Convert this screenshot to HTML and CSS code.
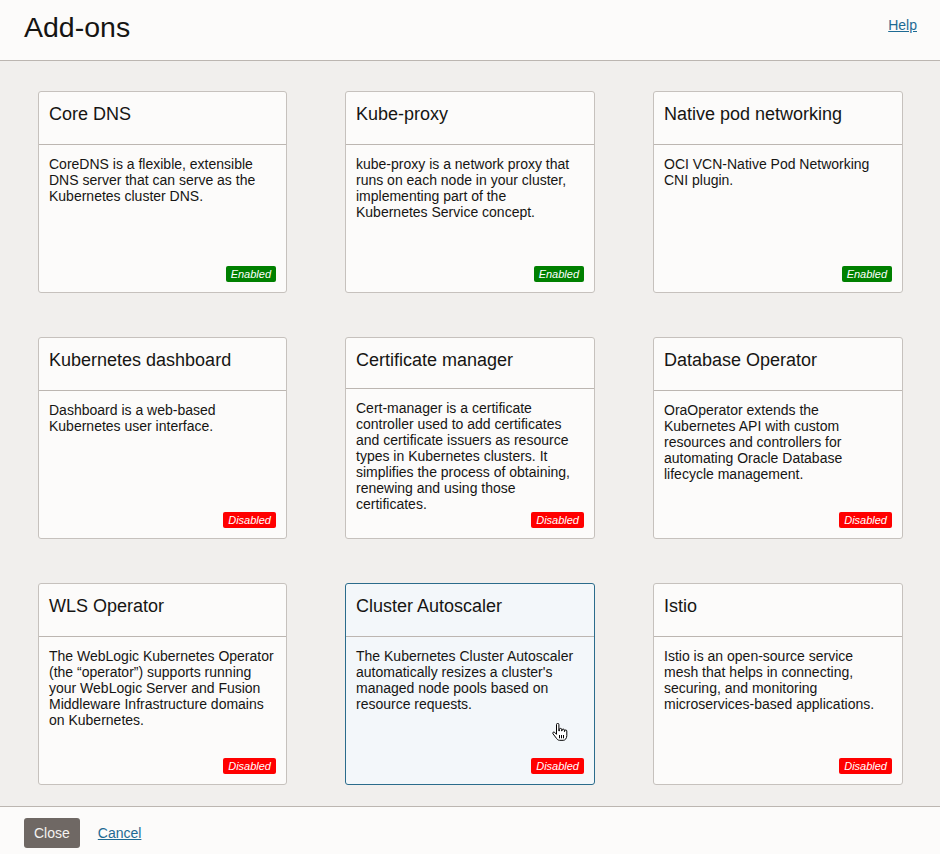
FILE: index.html
```html
<!DOCTYPE html>
<html lang="en">
<head>
<meta charset="utf-8">
<title>Add-ons</title>
<link rel="stylesheet" href="styles.css">
</head>
<body>
<div class="dialog">
  <header class="dlg-header">
    <h1 class="dlg-title">Add-ons</h1>
    <a class="link help" href="#">Help</a>
  </header>
  <main class="dlg-body">
    <div class="grid">
      <div class="card">
        <div class="card-head">Core DNS</div>
        <div class="card-body">
          <p class="desc">CoreDNS is a flexible, extensible DNS server that can serve as the Kubernetes cluster DNS.</p>
          <span class="badge on">Enabled</span>
        </div>
      </div>
      <div class="card">
        <div class="card-head">Kube-proxy</div>
        <div class="card-body">
          <p class="desc">kube-proxy is a network proxy that runs on each node in your cluster, implementing part of the Kubernetes Service concept.</p>
          <span class="badge on">Enabled</span>
        </div>
      </div>
      <div class="card">
        <div class="card-head">Native pod networking</div>
        <div class="card-body">
          <p class="desc">OCI VCN-Native Pod Networking CNI plugin.</p>
          <span class="badge on">Enabled</span>
        </div>
      </div>
      <div class="card">
        <div class="card-head">Kubernetes dashboard</div>
        <div class="card-body">
          <p class="desc">Dashboard is a web-based Kubernetes user interface.</p>
          <span class="badge off">Disabled</span>
        </div>
      </div>
      <div class="card">
        <div class="card-head">Certificate manager</div>
        <div class="card-body">
          <p class="desc">Cert-manager is a certificate controller used to add certificates and certificate issuers as resource types in Kubernetes clusters. It simplifies the process of obtaining, renewing and using those certificates.</p>
          <span class="badge off">Disabled</span>
        </div>
      </div>
      <div class="card">
        <div class="card-head">Database Operator</div>
        <div class="card-body">
          <p class="desc">OraOperator extends the Kubernetes API with custom resources and controllers for automating Oracle Database lifecycle management.</p>
          <span class="badge off">Disabled</span>
        </div>
      </div>
      <div class="card">
        <div class="card-head">WLS Operator</div>
        <div class="card-body">
          <p class="desc">The WebLogic Kubernetes Operator (the “operator”) supports running your WebLogic Server and Fusion Middleware Infrastructure domains on Kubernetes.</p>
          <span class="badge off">Disabled</span>
        </div>
      </div>
      <div class="card hover">
        <div class="card-head">Cluster Autoscaler</div>
        <div class="card-body">
          <p class="desc">The Kubernetes Cluster Autoscaler automatically resizes a cluster's managed node pools based on resource requests.</p>
          <span class="badge off">Disabled</span>
        </div>
        <svg class="cursor" width="16" height="19" viewBox="0 0 16 19" aria-hidden="true">
          <path d="M4.5 1.6a1.2 1.2 0 0 1 2.4 0V8h.4V6.6a1.2 1.2 0 0 1 2.4 0V8h.3V7.3a1.2 1.2 0 0 1 2.4 0V8.6h.2V8.1a1.1 1.1 0 0 1 2.2 0v4.4c0 2.6-1.4 4.8-3.6 4.8H7.6c-1.5 0-2.3-.8-3-1.8L1 10.8a1.1 1.1 0 0 1 1.7-1.4l1.8 1.9Z" fill="#fff" stroke="#000" stroke-width="1" stroke-linejoin="round"/>
          <path d="M7.5 12v3.3M9.5 12v3.3M11.5 12v3.3" stroke="#000" stroke-width="1"/>
        </svg>
      </div>
      <div class="card">
        <div class="card-head">Istio</div>
        <div class="card-body">
          <p class="desc">Istio is an open-source service mesh that helps in connecting, securing, and monitoring microservices-based applications.</p>
          <span class="badge off">Disabled</span>
        </div>
      </div>
    </div>
  </main>
  <footer class="dlg-footer">
    <button class="btn" type="button">Close</button>
    <a class="link cancel" href="#">Cancel</a>
  </footer>
</div>
</body>
</html>
```

FILE: styles.css
```css
* { box-sizing: border-box; }

html, body {
  margin: 0;
  padding: 0;
  height: 100%;
}

body {
  font-family: "Liberation Sans", Arial, sans-serif;
  color: #161513;
  background: #fcfbfa;
}

.dialog {
  display: flex;
  flex-direction: column;
  height: 854px;
}

.dlg-header {
  display: flex;
  justify-content: space-between;
  align-items: flex-start;
  height: 61px;
  padding: 0 23px 0 24px;
  background: #fcfbfa;
  border-bottom: 1px solid #bcb6b1;
}

.dlg-title {
  margin: 0;
  padding-top: 11px;
  font-size: 28.5px;
  line-height: 32px;
  font-weight: normal;
}

.link {
  color: #1e6a93;
  text-decoration: underline;
  font-size: 14px;
  line-height: 16px;
}

.help {
  margin-top: 17px;
}

.dlg-body {
  flex: 1;
  background: #f1efed;
  padding: 30px 37px 0 38px;
}

.grid {
  display: grid;
  grid-template-columns: 249px 250px 250px;
  column-gap: 58px;
  row-gap: 44px;
}

.card {
  position: relative;
  display: flex;
  flex-direction: column;
  height: 202px;
  background: #fcfbfa;
  border: 1px solid #c6c1bd;
  border-radius: 3px;
}

.card.hover {
  background: #f3f7fa;
  border-color: #2b6c8c;
}

.card-head {
  height: 53px;
  padding: 11px 10px 0;
  font-size: 18px;
  line-height: 22px;
  border-bottom: 1px solid #bcb6b1;
}

.card-body {
  flex: 1;
  display: flex;
  flex-direction: column;
  align-items: flex-end;
  padding: 11px 10px 10px;
}

.desc {
  flex: 1;
  align-self: stretch;
  width: 225.5px;
  margin: 0;
  font-size: 14px;
  line-height: 16px;
}

.badge {
  display: inline-block;
  padding: 0 5px;
  height: 16px;
  font-size: 11px;
  line-height: 16px;
  font-style: italic;
  color: #fff;
  border-radius: 2px;
}

.badge.on { background: #008000; }
.badge.off { background: #ff0000; }

.cursor {
  position: absolute;
  left: 206px;
  top: 139px;
}

.dlg-footer {
  display: flex;
  align-items: flex-start;
  gap: 18px;
  height: 48px;
  padding: 11px 24px 0;
  background: #fcfbfa;
  border-top: 1px solid #bcb6b1;
}

.btn {
  height: 30px;
  padding: 0 10px;
  border: none;
  border-radius: 3px;
  background: #6f6864;
  color: #f5f3f1;
  font-family: "Liberation Sans", Arial, sans-serif;
  font-size: 14px;
}

.cancel {
  margin-top: 7px;
}
```
